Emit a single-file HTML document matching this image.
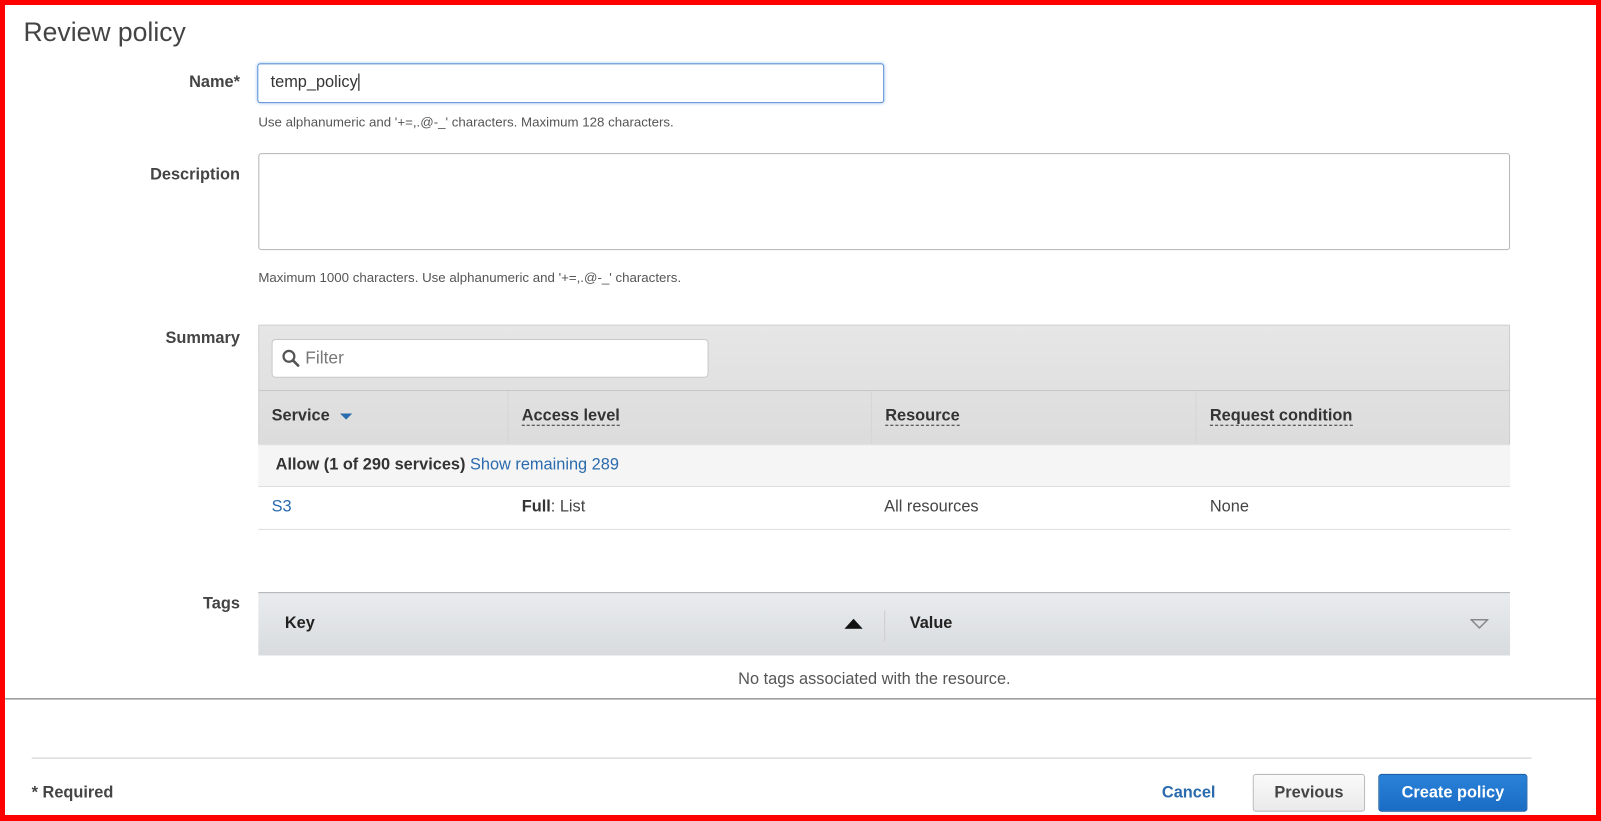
<!DOCTYPE html>
<html><head><style>
*{box-sizing:border-box;margin:0;padding:0}
body{width:1601px;height:821px;position:relative;background:#fff;font-family:"Liberation Sans",Arial,sans-serif;color:#444;overflow:hidden}
#w{position:absolute;left:0;top:0;width:1568px;height:804px;transform:scale(1.0210);transform-origin:0 0}
.a{position:absolute}
.lbl{position:absolute;right:1333px;font-weight:bold;font-size:16px;color:#444;text-align:right}
.hint{position:absolute;left:253px;font-size:13px;color:#555}
.th{position:absolute;top:383px;height:52px;border-right:1px solid #d5d5d5;font-weight:bold;font-size:16px;color:#333;padding:16px 0 0 13px}
.dash{border-bottom:1px dashed #333}
.td{position:absolute;top:488px;font-size:16px;color:#444}
</style></head><body>
<div class="a" style="left:0;top:0;width:1601px;height:821px;border:5px solid #f00;border-bottom-width:6px;z-index:10;pointer-events:none"></div>
<div id="w">
<div class="a" style="left:23px;top:16px;font-size:26px;color:#444">Review policy</div>

<div class="lbl" style="top:72px">Name*</div>
<div class="a" style="left:252px;top:62px;width:614px;height:39px;border:1px solid #5c8fd6;border-radius:3px;box-shadow:0 0 3px #a8c8f0;font-size:16px;color:#333;padding:9px 12px">temp_policy<span style="border-left:1px solid #000;margin-left:1px"></span></div>
<div class="hint" style="top:112px">Use alphanumeric and '+=,.@-_' characters. Maximum 128 characters.</div>

<div class="lbl" style="top:163px">Description</div>
<div class="a" style="left:253px;top:150px;width:1226px;height:95px;border:1px solid #b5b5b5;border-radius:3px"></div>
<div class="hint" style="top:264px">Maximum 1000 characters. Use alphanumeric and '+=,.@-_' characters.</div>

<div class="lbl" style="top:323px">Summary</div>
<div class="a" style="left:253px;top:318px;width:1226px;height:118px;background:linear-gradient(#e6e6e6,#dcdcdc);border:1px solid #ccc"></div>
<div class="a" style="left:266px;top:332px;width:428px;height:38px;background:#fff;border:1px solid #c8c8c8;border-radius:4px;font-size:17px;color:#777;padding:8px 0 0 32px">Filter
<svg class="a" style="left:9px;top:9px" width="18" height="18" viewBox="0 0 18 18"><circle cx="7" cy="7" r="5.3" fill="none" stroke="#555" stroke-width="2.2"/><path d="M11 11l5 5" stroke="#555" stroke-width="2.6" stroke-linecap="round"/></svg></div>
<div class="a" style="left:253px;top:382px;width:1226px;height:1px;background:#c8c8c8"></div>
<div class="th" style="left:253px;width:245px">Service <svg width="12" height="8" style="margin-left:6px"><path d="M0 1h12L6 7z" fill="#2b6cb0"/></svg></div>
<div class="th" style="left:498px;width:356px"><span class="dash">Access level</span></div>
<div class="th" style="left:854px;width:318px"><span class="dash">Resource</span></div>
<div class="th" style="left:1172px;width:307px;border-right:none"><span class="dash">Request condition</span></div>
<div class="a" style="left:253px;top:435px;width:1226px;height:42px;background:#f5f5f5;border-top:1px solid #ddd;border-bottom:1px solid #ddd;font-size:16px;padding:11px 0 0 17px"><b style="color:#333">Allow (1 of 290 services)</b> <span style="color:#2a6aad">Show remaining 289</span></div>
<div class="td" style="left:266px;color:#2a6aad">S3</div>
<div class="td" style="left:511px"><b style="color:#333">Full</b>: List</div>
<div class="td" style="left:866px">All resources</div>
<div class="td" style="left:1185px">None</div>
<div class="a" style="left:253px;top:518px;width:1226px;height:1px;background:#ddd"></div>

<div class="lbl" style="top:583px">Tags</div>
<div class="a" style="left:253px;top:580px;width:1226px;height:62px;background:linear-gradient(#e9ecee,#d8dbdd);border-top:1px solid #aaa"></div>
<div class="a" style="left:279px;top:602px;font-weight:bold;font-size:16px;color:#222">Key</div>
<svg class="a" style="left:827px;top:606px" width="18" height="10"><path d="M0 10h18L9 0z" fill="#111"/></svg>
<div class="a" style="left:866px;top:598px;width:1px;height:30px;background:#ccc"></div>
<div class="a" style="left:891px;top:602px;font-weight:bold;font-size:16px;color:#222">Value</div>
<svg class="a" style="left:1440px;top:606px" width="18" height="10"><path d="M1 1h16L9 9z" fill="none" stroke="#888" stroke-width="1.5"/></svg>
<div class="a" style="left:723px;top:657px;font-size:16px;color:#555">No tags associated with the resource.</div>

<div class="a" style="left:5px;top:684px;width:1560px;height:1px;background:#666"></div>
<div class="a" style="left:31px;top:742px;width:1469px;height:1px;background:#ccc"></div>
<div class="a" style="left:31px;top:768px;font-weight:bold;font-size:16px;color:#444">* Required</div>
<div class="a" style="left:1138px;top:768px;font-weight:bold;font-size:16px;color:#2a6aad">Cancel</div>
<div class="a" style="left:1227px;top:758px;width:110px;height:37px;border:1px solid #bbb;border-radius:3px;background:linear-gradient(#fafafa,#eaeaea);font-weight:bold;font-size:16px;color:#444;text-align:center;padding-top:9px">Previous</div>
<div class="a" style="left:1350px;top:758px;width:146px;height:37px;border:1px solid #1a5fa8;border-radius:3px;background:linear-gradient(#2a82d8,#1a6cc4);font-weight:bold;font-size:16px;color:#fff;text-align:center;padding-top:9px">Create policy</div>
</div>
</body></html>
